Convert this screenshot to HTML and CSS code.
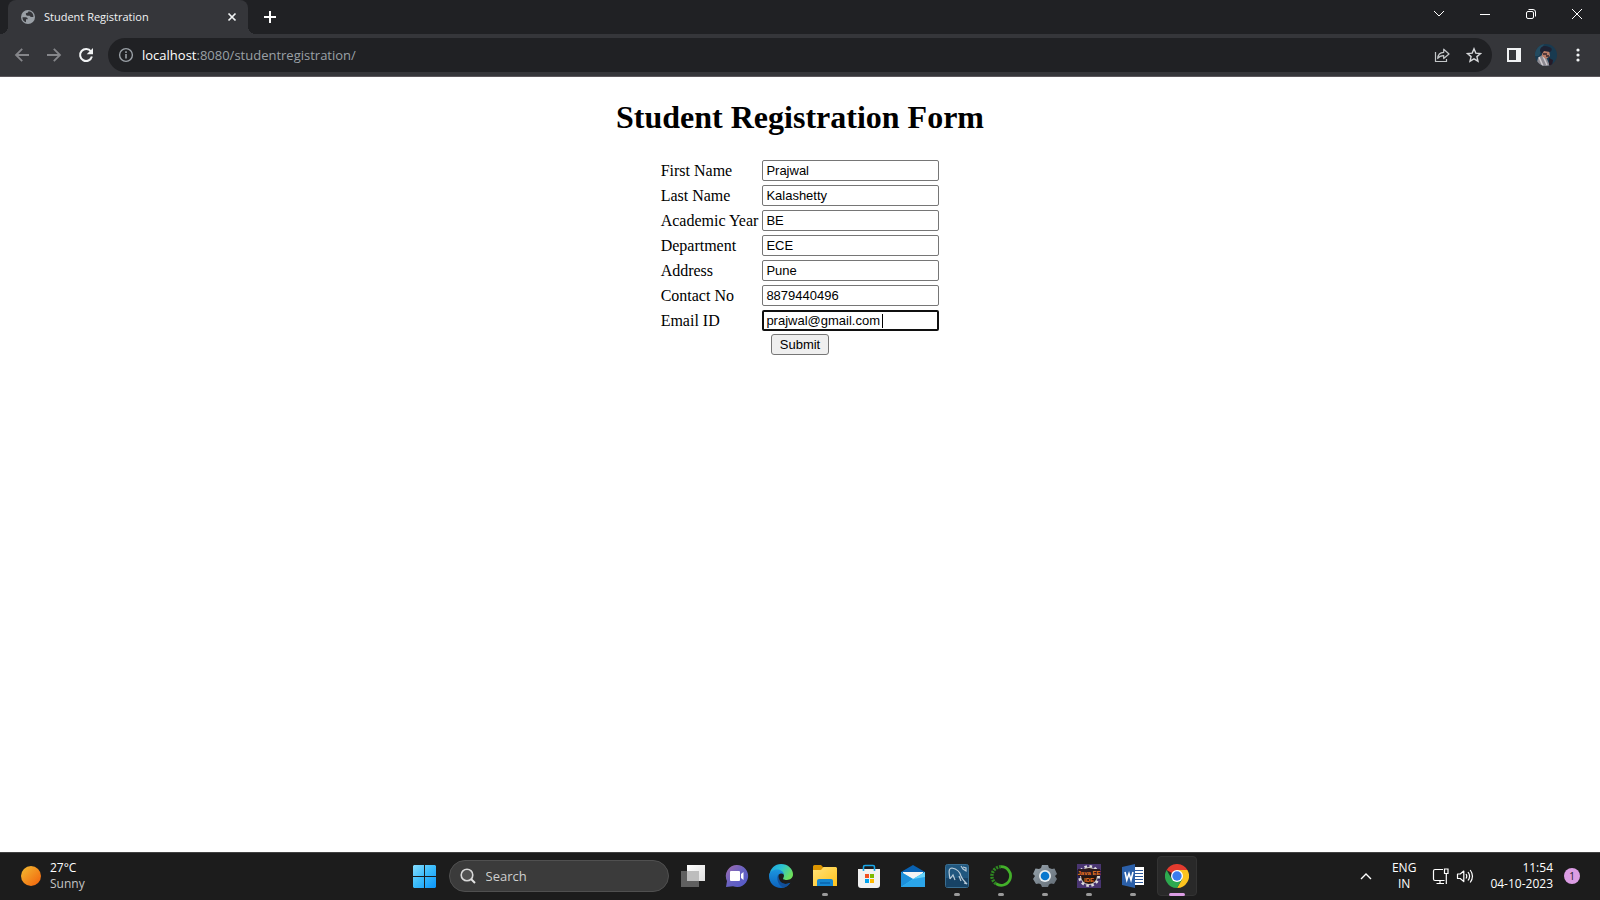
FILE: index.html
```html
<!DOCTYPE html>
<html lang="en">
<head>
<meta charset="utf-8">
<title>Student Registration</title>
<link rel="stylesheet" href="styles.css">
</head>
<body>
<header class="browser">
  <div class="tabstrip">
    <div class="tab">
      <svg class="globe" width="16" height="16" viewBox="0 0 16 16"><circle cx="8" cy="8" r="7" fill="#9aa0a6"/><path d="M2.500 8.200h3.200c1.600 0 2.200 1 2 2.100H6v2.900C3.700 12.500 2.300 10.600 2.500 8.200zM8.500 2.300c-.2 1.500-1.600 1.900-2.600 2-.2 1.700.3 2.300 1.500 2.400h2.300c.5 1.200 1.500 1.400 3.700 1.300C13.600 4.900 11.500 2.500 8.500 2.300z" fill="#35363a"/></svg>
      <span class="tab-title">Student Registration</span>
      <button class="tab-close" aria-label="Close tab"><svg width="10" height="10" viewBox="0 0 10 10"><path d="M1.500 1.500l7 7m0-7l-7 7" stroke="#f1f3f4" stroke-width="1.700"/></svg></button>
    </div>
    <button class="new-tab" aria-label="New tab"><svg width="14" height="14" viewBox="0 0 14 14"><path d="M7 1v12M1 7h12" stroke="#fff" stroke-width="2"/></svg></button>
    <div class="window-controls">
      <button aria-label="Search tabs"><svg width="12" height="12" viewBox="0 0 12 12"><path d="M1 3l5 5 5-5" fill="none" stroke="#fff"/></svg></button>
      <button aria-label="Minimize"><svg width="12" height="12" viewBox="0 0 12 12"><path d="M1 6.500h10" stroke="#fff"/></svg></button>
      <button aria-label="Restore"><svg width="12" height="12" viewBox="0 0 12 12"><rect x="1.500" y="3.500" width="7" height="7" rx="1.500" fill="none" stroke="#fff"/><path d="M3.500 1.500H8a2.500 2.500 0 0 1 2.500 2.500v4.500" fill="none" stroke="#fff"/></svg></button>
      <button aria-label="Close"><svg width="12" height="12" viewBox="0 0 12 12"><path d="M1 1l10 10M11 1L1 11" stroke="#fff"/></svg></button>
    </div>
  </div>
  <div class="toolbar">
    <nav class="nav-buttons">
      <button aria-label="Back"><svg width="16" height="16" viewBox="0 0 16 16"><path d="M15 8H2m6.200-6.200L2 8l6.200 6.200" fill="none" stroke="#85868a" stroke-width="1.800"/></svg></button>
      <button aria-label="Forward"><svg width="16" height="16" viewBox="0 0 16 16"><path d="M1 8h13M7.800 1.800L14 8l-6.200 6.200" fill="none" stroke="#85868a" stroke-width="1.800"/></svg></button>
      <button aria-label="Reload"><svg width="16" height="16" viewBox="0 0 16 16"><path d="M13 4.500A6 6 0 1 0 13.900 9.500" fill="none" stroke="#f1f3f4" stroke-width="2"/><path d="M15 1v6.300H8.700z" fill="#f1f3f4"/></svg></button>
    </nav>
    <div class="address">
      <svg width="16" height="16" viewBox="0 0 16 16"><circle cx="8" cy="8" r="6.400" fill="none" stroke="#9aa0a6" stroke-width="1.400"/><path d="M8 7v4.400M8 4.300v1.600" stroke="#9aa0a6" stroke-width="1.600"/></svg>
      <span class="url"><b>localhost</b>:8080/studentregistration/</span>
      <button aria-label="Share"><svg width="16" height="16" viewBox="0 0 16 16"><path d="M1.500 5v9.500h11V12" fill="none" stroke="#c4c7c9" stroke-width="1.200"/><path d="M3.700 11.500c.2-4 2.300-6 6-6.200V2.200L15 7l-5.300 4.500V8.600C7 8.500 5.200 9.300 3.700 11.500z" fill="none" stroke="#c4c7c9" stroke-width="1.200" stroke-linejoin="round"/></svg></button>
      <button aria-label="Bookmark"><svg width="16" height="16" viewBox="0 0 16 16"><path d="M8 1.800l1.800 4.300 4.700.4-3.600 3.100 1.100 4.600L8 11.800l-4 2.400 1.100-4.600-3.600-3.100 4.700-.4z" fill="none" stroke="#d5d7d9" stroke-width="1.400"/></svg></button>
    </div>
    <div class="toolbar-end">
      <button aria-label="Side panel"><svg width="14" height="14" viewBox="0 0 14 14"><path fill-rule="evenodd" d="M0 0h14v14H0zM2 2v10h7V2z" fill="#f1f3f4"/></svg></button>
      <button aria-label="Profile"><svg width="22" height="22" viewBox="0 0 22 22"><defs><clipPath id="face"><circle cx="11" cy="11" r="11"/></clipPath></defs><g clip-path="url(#face)"><path fill="#183a50" d="M0 0h22v22H0z"/><path d="M0 0h9L4 12H0z" fill="#244b60"/><path d="M1 22l2-8 4-3 5 4 3 7z" fill="#8e8b92"/><path d="M4 13l4 9M8 12l4 9" stroke="#d0cbd0" stroke-width="1.500"/><path d="M7 7l7-1 1 6-4 3-4-3z" fill="#b97d68"/><path d="M5 7c0-5 5-6 9-4 4 1 3 4 1 5L9 7l-2 3z" fill="#1e2233"/><path d="M8 10h4m-1 2h3" stroke="#35252c" stroke-width="1.500"/><path d="M14 14l4 2-1 6h-3z" fill="#251b28"/></g></svg></button>
      <button aria-label="Menu"><svg width="4" height="14" viewBox="0 0 4 14"><g fill="#f1f3f4"><circle cx="2" cy="2" r="1.600"/><circle cx="2" cy="7" r="1.600"/><circle cx="2" cy="12" r="1.600"/></g></svg></button>
    </div>
  </div>
</header>

<main class="page">
  <h1>Student Registration Form</h1>
  <form onsubmit="return false">
    <table>
      <tr><td><label for="first">First Name</label></td><td><input id="first" type="text" value="Prajwal"></td></tr>
      <tr><td><label for="last">Last Name</label></td><td><input id="last" type="text" value="Kalashetty"></td></tr>
      <tr><td><label for="year">Academic Year</label></td><td><input id="year" type="text" value="BE"></td></tr>
      <tr><td><label for="dept">Department</label></td><td><input id="dept" type="text" value="ECE"></td></tr>
      <tr><td><label for="address">Address</label></td><td><input id="address" type="text" value="Pune"></td></tr>
      <tr><td><label for="contact">Contact No</label></td><td><input id="contact" type="text" value="8879440496"></td></tr>
      <tr><td><label for="email">Email ID</label></td><td><div class="field"><input id="email" class="active" type="text" value="prajwal@gmail.com"><span class="caret"></span></div></td></tr>
    </table>
    <button class="submit" type="submit">Submit</button>
  </form>
</main>

<footer class="taskbar">
  <div class="weather">
    <svg width="20" height="20" viewBox="0 0 20 20"><defs><linearGradient id="sun" x1="0" y1="0" x2="1" y2="1"><stop stop-color="#f3bd31"/><stop offset="1" stop-color="#f25f0b"/></linearGradient></defs><circle cx="10" cy="10" r="10" fill="url(#sun)"/></svg>
    <div class="stack"><span>27°C</span><span class="muted">Sunny</span></div>
  </div>
  <div class="apps">
    <button class="app start" aria-label="Start"><svg width="24" height="24" viewBox="0 0 24 24"><defs><linearGradient id="win" gradientUnits="userSpaceOnUse" x1="0" y1="0" x2="24" y2="24"><stop stop-color="#8be0ff"/><stop offset=".5" stop-color="#3cbcfa"/><stop offset="1" stop-color="#0a95fb"/></linearGradient></defs><path d="M2 1h10v11H1V2zM13 1h10l1 1v10H13zM1 13h11v11H2l-1-1zM13 13h11v10l-1 1H13z" fill="url(#win)"/></svg></button>
    <label class="search">
      <svg width="16" height="16" viewBox="0 0 16 16"><circle cx="7" cy="7" r="5.800" fill="#515151" stroke="#d8d8d8" stroke-width="1.600"/><path d="M11 11l4 4" stroke="#e3e3e3" stroke-width="2"/></svg>
      <input type="text" placeholder="Search" aria-label="Search">
    </label>
    <button class="app" aria-label="Task view"><svg width="24" height="24" viewBox="0 0 24 24"><defs><linearGradient id="tv" x1="0" y1="0" x2="1" y2="1"><stop stop-color="#fff"/><stop offset="1" stop-color="#dedede"/></linearGradient></defs><path d="M6 1h18v16H6z" fill="url(#tv)"/><path d="M0 7h18v16H0z" fill="#606060"/><path d="M6 7h12v10H6z" fill="#bdbdbd"/></svg></button>
    <button class="app" aria-label="Chat"><svg width="24" height="24" viewBox="0 0 24 24"><defs><linearGradient id="chat" x1="0" y1="0" x2="1" y2="1"><stop stop-color="#a36cad"/><stop offset=".5" stop-color="#6862c2"/><stop offset="1" stop-color="#5058c8"/></linearGradient></defs><path d="M12 1a11 11 0 1 1-4 21.200L1 23l1-6A11 11 0 0 1 12 1z" fill="url(#chat)"/><rect x="5" y="7" width="10" height="10" rx="1" fill="#fff"/><path d="M16 10l2.500-2v8L16 14z" fill="#fff"/></svg></button>
    <button class="app" aria-label="Edge"><svg width="24" height="24" viewBox="0 0 24 24"><defs><linearGradient id="ed1" x1="0" y1="0" x2="1" y2=".5"><stop stop-color="#1b9de2"/><stop offset=".5" stop-color="#2bc3d2"/><stop offset="1" stop-color="#6de05d"/></linearGradient><linearGradient id="ed2" x1="0" y1="0" x2="0" y2="1"><stop stop-color="#1b95df"/><stop offset="1" stop-color="#0c62bd"/></linearGradient></defs><path d="M.5 11C1 4.500 6 0 12 0c7 0 12 5 12 10.300 0 4-3 5.700-6 5.700-3.500 0-4.300-1-3.700-2 2-3.300-.5-6-4.300-6-4 0-7 1.500-9.500 3z" fill="url(#ed1)"/><path d="M0 12c0-4 4-6.500 8-6.500 3.500 0 6.500 2 7 5-3-2-6-.5-6 3 0 5 5 8 12 5.500C18.500 22.500 15.500 24 12 24 5 24 0 18.500 0 12z" fill="url(#ed2)"/><path d="M9.500 10c-2.500 4-1 11 5 13.800 3-.8 5-2.400 7-5-6 3-12.500 0-12-8.800z" fill="#12509a"/></svg></button>
    <button class="app running" aria-label="File Explorer"><svg width="24" height="24" viewBox="0 0 24 24"><defs><linearGradient id="fold" x1="0" y1="0" x2="1" y2="1"><stop stop-color="#ffe27a"/><stop offset="1" stop-color="#ffc21b"/></linearGradient></defs><path d="M0 2.500Q0 1 1.500 1H8l3 3h11v7H0z" fill="#dc9500"/><path d="M0 6h8l2.500-3H23l1 1v18H0z" fill="url(#fold)"/><path d="M4 22v-5q0-2 2-2h12q2 0 2 2v5z" fill="#1587d1"/><path d="M7 19h10" stroke="#0963ac" stroke-width="1.500"/></svg></button>
    <button class="app" aria-label="Microsoft Store"><svg width="24" height="24" viewBox="0 0 24 24"><path d="M1 5h22v16q0 3-3 3H4q-3 0-3-3z" fill="#f1f1f1"/><path d="M6.500 7V3q0-1.500 1.500-1.500h8q1.500 0 1.500 1.500v4" fill="none" stroke="#1aa7e8" stroke-width="1.600"/><path d="M8 10h4v4H8z" fill="#f15022"/><path d="M13 10h4v4h-4z" fill="#7eb900"/><path d="M8 15h4v4H8z" fill="#00a3ee"/><path d="M13 15h4v4h-4z" fill="#ffb800"/></svg></button>
    <button class="app" aria-label="Mail"><svg width="24" height="24" viewBox="0 0 24 24"><path d="M0 8l12-7 12 7v3H0z" fill="#0861b1"/><path d="M2 8h20v8H2z" fill="#f4f4f4"/><path d="M0 8l12 7 12-7v15H0z" fill="#35bdf5"/><path d="M0 23l12-8L0 8z" fill="#1c8fda"/><path d="M0 23L24 8v15z" fill="#2ba5e9"/><path d="M12 15l12-7v5z" fill="#65d3fa"/></svg></button>
    <button class="app running" aria-label="MySQL Workbench"><svg width="24" height="24" viewBox="0 0 24 24"><rect x=".5" y=".5" width="23" height="23" rx="2" fill="#20577f" stroke="#3a6e91"/><path d="M1 14h22v9H1z" fill="#174366"/><path d="M5 15C4 9 3 4 7 4c5 1 8 4 9 8 1 3 3 5 6 8l-3-1M5 15l3-4 2 5M14 12l2 5M16 2l2 3 3 2V4l-3-1" fill="none" stroke="#b9cbd8" stroke-width="1.200"/></svg></button>
    <button class="app running" aria-label="Anaconda"><svg width="24" height="24" viewBox="0 0 24 24"><path d="M12 2.700a9.300 9.300 0 1 1-5 17" fill="none" stroke="#43b02a" stroke-width="2.800"/><path d="M12 2.700a9.300 9.300 0 0 0-5 17" fill="none" stroke="#2f8a22" stroke-width="3.400" stroke-dasharray="2 1"/></svg></button>
    <button class="app running" aria-label="Settings"><svg width="24" height="24" viewBox="0 0 24 24"><defs><linearGradient id="gear" x1="0" y1="0" x2="1" y2="1"><stop stop-color="#98a4ad"/><stop offset="1" stop-color="#606a73"/></linearGradient></defs><path d="M9 1h6l1 3 3 1 2.500-.5L24 10l-2 2 2 3-3 5-3-.5-2 1L15 23H9l-1-2.500-2-1-3 .5-3-5 2-3-2-2 2.500-5.500L6 5l2-1z" fill="url(#gear)"/><circle cx="12" cy="12" r="6" fill="#e8edf0"/><circle cx="12" cy="12" r="4.300" fill="#0877ce"/></svg></button>
    <button class="app running" aria-label="Eclipse"><svg width="24" height="24" viewBox="0 0 24 24"><path fill="#493571" d="M0 0h24v24H0z"/><path fill="#2c2352" d="M0 6h24v10H0z"/><circle cx="12" cy="12" r="9.500" fill="none" stroke="#ddd" stroke-width="3" stroke-dasharray="2.500 2.500"/><circle cx="12" cy="12" r="8.500" fill="#26150f" stroke="#d6cfcf"/><path d="M1 5h22v7H1z" fill="#2a1a20"/><text class="ide" x="12" y="11">Java EE</text><text class="ide" x="12" y="17.500">IDE</text></svg></button>
    <button class="app running" aria-label="Word"><svg width="24" height="24" viewBox="0 0 24 24"><path fill="#fff" d="M13 3h10v18H13z"/><path d="M14 6.500h8m-8 3h8m-8 3h8m-8 3h8m-8 3h8" stroke="#2b579a" stroke-width="1.200"/><path fill="#2b5fa8" d="M1 3l13-3v24L1 21z"/><path d="M4 8l1.800 8L8 9.500l2 6.500L12 8" fill="none" stroke="#fff" stroke-width="1.600"/></svg></button>
    <button class="app running current" aria-label="Chrome"><svg width="24" height="24" viewBox="0 0 24 24"><path d="M12 12L1.600 6A12 12 0 0 1 22.400 6z" fill="#e33b2e"/><path d="M12 12V6h10.400A12 12 0 0 1 12 24l5.200-9z" fill="#fcc31e"/><path d="M1.600 6A12 12 0 0 0 12 24l5.200-9L12 12l-5.200 3z" fill="#2da94f"/><circle cx="12" cy="12" r="6" fill="#fff"/><circle cx="12" cy="12" r="4.700" fill="#397ced"/></svg></button>
  </div>
  <div class="tray">
    <svg class="up" width="12" height="12" viewBox="0 0 12 12"><path d="M1 9l5-5 5 5" fill="none" stroke="#fff" stroke-width="1.400"/></svg>
    <div class="stack lang"><span>ENG</span><span>IN</span></div>
    <div class="status">
      <svg width="18" height="18" viewBox="0 0 18 18"><path d="M11 2.500H3A1.500 1.500 0 0 0 1.500 4v8A1.500 1.500 0 0 0 3 13.500h9.500M8 13.500v3M4.500 16.500H12" fill="none" stroke="#fff" stroke-width="1.200"/><path d="M12.500 2h3.500v4.500h-3.500zM14.300 7v10" fill="none" stroke="#fff" stroke-width="1.200"/></svg>
      <svg width="18" height="18" viewBox="0 0 18 18"><path d="M1.500 7v4.500h2.700l3.600 3V4L4.200 7z" fill="none" stroke="#fff" stroke-width="1.200" stroke-linejoin="round"/><path d="M10 7q1.500 2.200 0 4.500M12 5q3.200 4.200 0 8.500M14.200 3q4.500 6.200 0 12.500" fill="none" stroke="#fff" stroke-width="1.200"/></svg>
    </div>
    <div class="stack clock"><span>11:54</span><span>04-10-2023</span></div>
    <span class="badge">1</span>
  </div>
</footer>
</body>
</html>
```

FILE: styles.css
```css
* { box-sizing: border-box; }
body {
  margin: 0;
  min-height: 100vh;
  display: flex;
  flex-direction: column;
  background: #fff;
  color: #000;
  font-family: "Liberation Serif", "Times New Roman", serif;
  font-size: 16px;
}
svg { display: block; flex: none; }
button { font: inherit; }
.browser, .taskbar { font-family: "Open Sans", "Noto Sans", sans-serif; }
.browser button, .app {
  display: flex;
  align-items: center;
  justify-content: center;
  border: 0;
  padding: 0;
  background: none;
}

/* Tab strip */
.tabstrip { display: flex; height: 34px; padding-left: 8px; background: #202124; }
.tab {
  position: relative;
  display: flex;
  align-items: center;
  width: 240px;
  padding: 0 8px 0 12px;
  border-radius: 8px 8px 0 0;
  background: #35363a;
  color: #f1f3f4;
  font-size: 11px;
}
.tab::before, .tab::after {
  content: "";
  position: absolute;
  bottom: 0;
  width: 8px;
  height: 8px;
}
.tab::before { left: -8px; background: radial-gradient(circle at 0 0, #202124 8px, #35363a 8px); }
.tab::after { right: -8px; background: radial-gradient(circle at 100% 0, #202124 8px, #35363a 8px); }
.tab-title { flex: 1; margin-left: 8px; padding-bottom: 2px; }
.tab-close { width: 16px; height: 16px; }
.new-tab { width: 28px; margin-left: 8px; }
.window-controls { display: flex; margin-left: auto; }
.window-controls button { width: 46px; height: 28px; }

/* Toolbar */
.toolbar {
  display: flex;
  align-items: center;
  height: 43px;
  padding: 0 6px;
  border-bottom: 1px solid #5b575c;
  background: #35363a;
}
.nav-buttons { display: flex; }
.nav-buttons button { width: 32px; height: 32px; }
.address {
  flex: 1;
  display: flex;
  align-items: center;
  height: 34px;
  margin-left: 6px;
  padding: 0 2px 0 10px;
  border-radius: 17px;
  background: #202124;
}
.address button { width: 32px; height: 32px; }
.url { flex: 1; margin-left: 8px; color: #9aa0a6; font-size: 13px; }
.url b { color: #fff; font-weight: 400; }
.toolbar-end { display: flex; align-items: center; margin-left: 6px; }
.toolbar-end button { width: 32px; height: 32px; }

/* Registration form */
.page { flex: 1; padding: 0 8px; text-align: center; }
h1 { margin: 22px 0 21px; font-size: 32px; line-height: 37px; }
table { margin: 0 auto; text-align: left; border-spacing: 2px; }
td { padding: 1px; line-height: 18px; }
.page input {
  display: block;
  width: 177px;
  height: 21px;
  padding: 1px 3px;
  border: 1px solid #767676;
  border-radius: 2px;
  background: #fff;
  color: #000;
  font: 13px "Liberation Sans", Arial, sans-serif;
}
.page input.active { border: 2px solid #101010; padding: 1px 2px; }
.field { position: relative; }
.caret { position: absolute; left: 120px; top: 4px; width: 1px; height: 14px; background: #000; }
.submit {
  height: 21px;
  padding: 0 8px;
  border: 1px solid #767676;
  border-radius: 3px;
  background: #efefef;
  color: #000;
  font: 13px "Liberation Sans", Arial, sans-serif;
  vertical-align: top;
}

/* Taskbar */
.taskbar {
  display: grid;
  grid-template-columns: 1fr auto 1fr;
  align-items: center;
  height: 48px;
  padding-bottom: 2px;
  border-top: 1px solid #414141;
  background: #1c1c1c;
  color: #fff;
  font-size: 12px;
}
.stack { display: flex; flex-direction: column; line-height: 16px; }
.muted { color: #c5c5c5; }
.weather { display: flex; align-items: center; gap: 9px; padding-left: 21px; }
.apps { display: flex; align-items: center; }
.app { position: relative; width: 44px; height: 40px; }
.search {
  display: flex;
  align-items: center;
  gap: 10px;
  width: 220px;
  height: 32px;
  margin: 0 2px 0 3px;
  padding: 0 10px;
  border: 1px solid #505050;
  border-radius: 16px;
  background: #3b3b3b;
}
.search input {
  flex: 1;
  min-width: 0;
  border: 0;
  padding: 0;
  background: none;
  color: #fff;
  font: 13px "Open Sans", sans-serif;
}
.search input::placeholder { color: #cfcfcf; }
.running::after {
  content: "";
  position: absolute;
  bottom: 0;
  left: 19px;
  width: 6px;
  height: 3px;
  border-radius: 2px;
  background: #9a9a9a;
}
.current::before {
  content: "";
  position: absolute;
  inset: 0 2px;
  border: 1px solid #333;
  border-radius: 4px;
  background: #292929;
}
.current svg { position: relative; }
.current::after { left: 14px; width: 16px; background: #dc9de4; }
.ide { fill: #f27822; font: bold 6px "Liberation Sans", sans-serif; text-anchor: middle; }
.tray { display: flex; align-items: center; justify-content: flex-end; padding-right: 20px; }
.lang { margin-left: 20px; text-align: center; }
.status { display: flex; gap: 6px; margin-left: 16px; }
.clock { margin-left: 16px; text-align: right; }
.badge {
  width: 16px;
  height: 16px;
  margin-left: 11px;
  border-radius: 50%;
  background: #dc9de4;
  color: #222;
  font-size: 10px;
  line-height: 16px;
  text-align: center;
}
```
